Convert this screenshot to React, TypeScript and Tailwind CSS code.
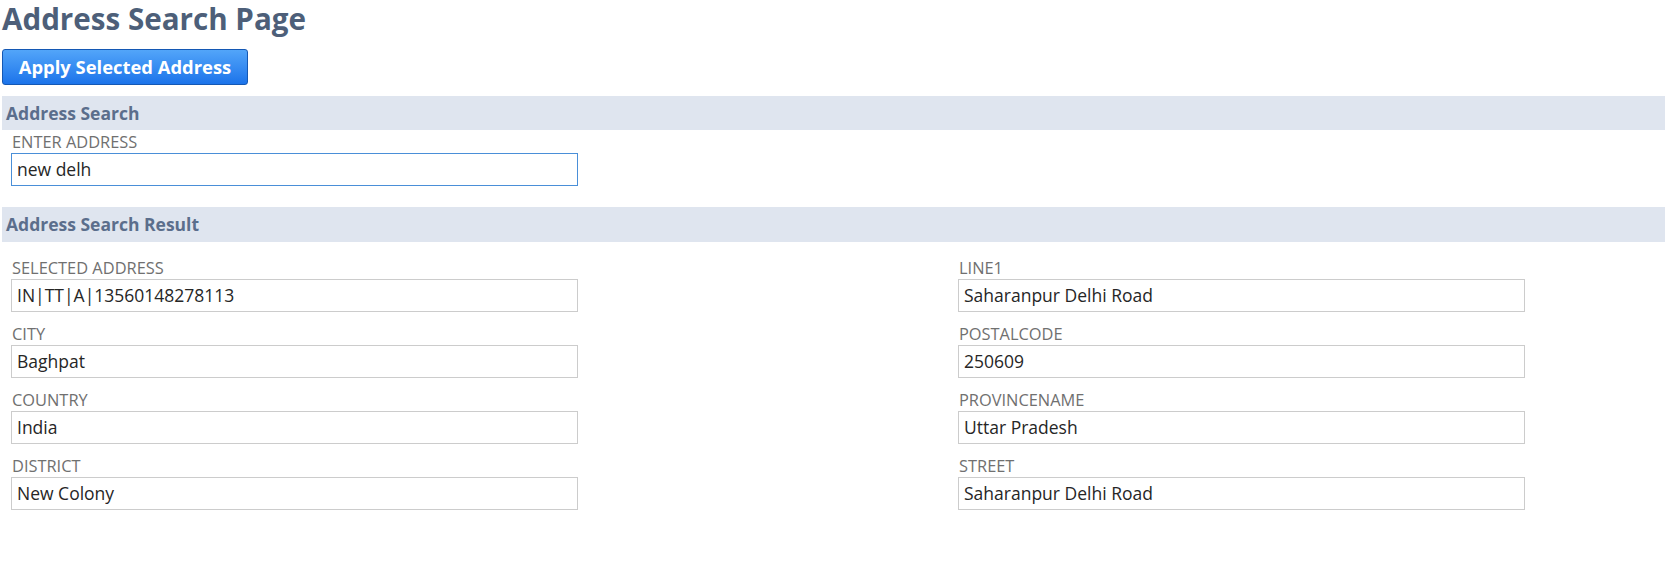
import React from "react";

const leftFields = [
  { label: "SELECTED ADDRESS", value: "IN|TT|A|13560148278113" },
  { label: "CITY", value: "Baghpat" },
  { label: "COUNTRY", value: "India" },
  { label: "DISTRICT", value: "New Colony" },
];

const rightFields = [
  { label: "LINE1", value: "Saharanpur Delhi Road" },
  { label: "POSTALCODE", value: "250609" },
  { label: "PROVINCENAME", value: "Uttar Pradesh" },
  { label: "STREET", value: "Saharanpur Delhi Road" },
];

function Field({ label, value }: { label: string; value: string }) {
  return (
    <div className="flex flex-col mb-[13px]">
      <div className="text-[16.4px] leading-[18px] text-[#707070] mb-[2px] pl-[1px]">{label}</div>
      <div className="w-[567px] h-[33px] border border-[#cccccc] bg-white flex items-center pl-[5px] text-[17.5px] text-[#262626]">
        {value}
      </div>
    </div>
  );
}

export default function App() {
  return (
    <div className="w-[1665px] min-h-[582px] bg-white" style={{ fontFamily: '"Open Sans", sans-serif' }}>
      <h1 className="text-[29.6px] leading-[36px] font-bold text-[#4d5f79] pl-[2px] pt-[1px]">Address Search Page</h1>
      <div className="pl-[2px] mt-[12px]">
        <button className="h-[36px] w-[246px] rounded-[3px] border border-[#1458b4] bg-gradient-to-b from-[#52a5f9] to-[#1b73ea] text-white text-[18.4px] font-bold flex items-center justify-center">
          Apply Selected Address
        </button>
      </div>
      <div className="ml-[2px] mt-[11px] h-[34px] bg-[#dfe5ef] flex items-center pl-[4px] text-[17.5px] font-bold text-[#5b6e8c]">
        Address Search
      </div>
      <div className="pl-[11px] mt-[3px]">
        <div className="text-[16.4px] leading-[18px] text-[#707070] mb-[2px] pl-[1px]">ENTER ADDRESS</div>
        <div className="w-[567px] h-[33px] border border-[#4a8fd8] bg-white flex items-center pl-[5px] text-[17.5px] text-[#262626]">
          new delh
        </div>
      </div>
      <div className="ml-[2px] mt-[21px] h-[35px] bg-[#dfe5ef] flex items-center pl-[4px] text-[17.5px] font-bold text-[#5b6e8c]">
        Address Search Result
      </div>
      <div className="flex pl-[11px] mt-[17px]">
        <div className="w-[947px] flex flex-col">
          {leftFields.map((f) => (
            <Field key={f.label} label={f.label} value={f.value} />
          ))}
        </div>
        <div className="flex flex-col">
          {rightFields.map((f) => (
            <Field key={f.label} label={f.label} value={f.value} />
          ))}
        </div>
      </div>
    </div>
  );
}
